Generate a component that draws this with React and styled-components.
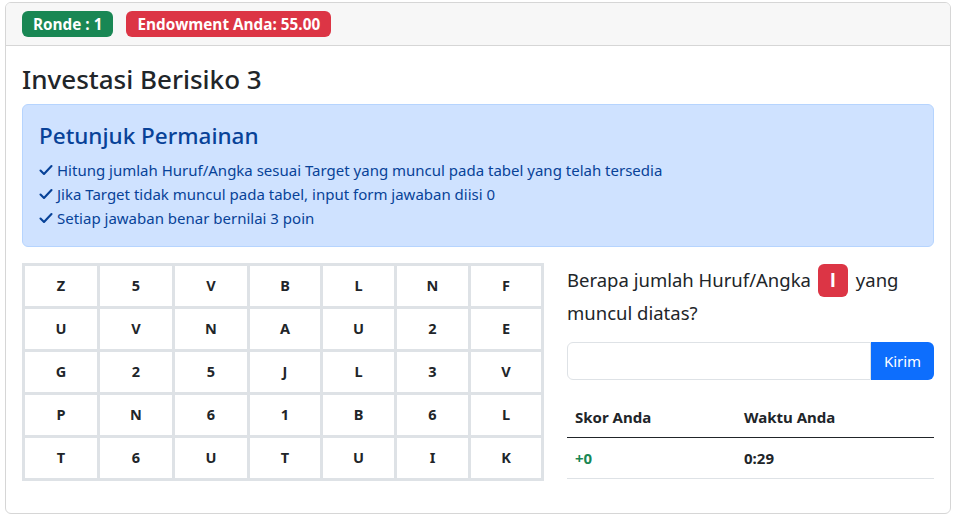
import React, { useState } from 'react'
import styled, { createGlobalStyle } from 'styled-components'

const GlobalStyle = createGlobalStyle`
  * { box-sizing: border-box; }
  body {
    margin: 0;
    background: #fff;
    color: #212529;
    font-family: "Noto Sans", "Open Sans", sans-serif;
    font-size: 15px;
    line-height: 1.5;
  }
`

const Page = styled('div')`
  padding: 2px 4px 0 5px;
`

const Card = styled('div')`
  border: 1px solid #d6d6d6;
  border-radius: 6px;
  background: #fff;
  overflow: hidden;
`

const CardHeader = styled('div')`
  display: flex;
  gap: 13px;
  padding: 8px 16px;
  background: #f7f7f7;
  border-bottom: 1px solid #d6d6d6;
`

const Badge = styled('span')`
  display: inline-block;
  padding: ${p => (p.$big ? '6px 12px' : '5px 11px')};
  margin: ${p => (p.$big ? '0 3px 0 2px' : '0')};
  font-family: "Open Sans", "Noto Sans", sans-serif;
  font-size: ${p => (p.$big ? '19px' : '15.3px')};
  font-weight: 700;
  line-height: ${p => (p.$big ? '1.1' : '1.05')};
  color: #fff;
  border-radius: 6px;
  background: ${p => (p.$tone === 'green' ? '#198754' : '#dc3545')};
  vertical-align: baseline;
`

const CardBody = styled('div')`
  padding: 16px;
`

const Title = styled('h3')`
  margin: 0 0 8px;
  font-size: 26px;
  font-weight: 500;
  line-height: 34px;
`

const Alert = styled('div')`
  background: #cfe2ff;
  border: 1px solid #b6d4fe;
  color: #084298;
  border-radius: 6px;
  padding: 16px;
  margin-bottom: 16px;
`

const AlertHeading = styled('h4')`
  margin: 0 0 7px;
  font-size: 22.5px;
  font-weight: 500;
  line-height: 30px;
`

const Rule = styled('div')`
  display: flex;
  align-items: center;
  gap: 4px;
  line-height: 24px;
`

const Check = styled('svg')`
  width: 14px;
  height: 14px;
  flex: 0 0 auto;
  fill: none;
  stroke: currentColor;
  stroke-width: 2.1;
  stroke-linecap: round;
  stroke-linejoin: round;
`

const Row = styled('div')`
  display: grid;
  grid-template-columns: 521px 1fr;
  column-gap: 24px;
`

const Grid = styled('table')`
  border-collapse: collapse;
  table-layout: fixed;
  border: 3px solid #dee2e6;
  width: 519px;
  margin-bottom: 16px;

  td {
    border: 3px solid #dee2e6;
    text-align: center;
    font-weight: 700;
    font-size: 14.5px;
    height: 43px;
    padding: 0;
  }
`

const Question = styled('p')`
  margin: 0 0 14px;
  padding-top: 1px;
  font-size: 18.5px;
  line-height: 31px;
`

const InputGroup = styled('div')`
  display: flex;
  height: 38px;
  margin-bottom: 17px;
`

const AnswerInput = styled('input')`
  flex: 1;
  min-width: 0;
  border: 1px solid #dee2e6;
  border-radius: 6px 0 0 6px;
  font: inherit;
  padding: 6px 12px;
  outline: none;
`

const SendButton = styled('button')`
  flex: 0 0 63px;
  border: none;
  background: #0d6efd;
  color: #fff;
  font: inherit;
  border-radius: 0 6px 6px 0;
  cursor: pointer;
`

const ScoreTable = styled('table')`
  width: 100%;
  border-collapse: collapse;

  th, td {
    text-align: left;
    padding: 8px;
    font-weight: 700;
    line-height: 24px;
  }
  th {
    border-bottom: 1px solid #212529;
  }
  td {
    border-bottom: 1px solid #dee2e6;
  }
  th:first-child {
    width: 169px;
  }
`

const Score = styled('span')`
  color: #198754;
`

const letters = [
  ['Z', '5', 'V', 'B', 'L', 'N', 'F'],
  ['U', 'V', 'N', 'A', 'U', '2', 'E'],
  ['G', '2', '5', 'J', 'L', '3', 'V'],
  ['P', 'N', '6', '1', 'B', '6', 'L'],
  ['T', '6', 'U', 'T', 'U', 'I', 'K'],
]

const colWidths = [75, 75, 75, 73, 74, 74, 73]

const rules = [
  'Hitung jumlah Huruf/Angka sesuai Target yang muncul pada tabel yang telah tersedia',
  'Jika Target tidak muncul pada tabel, input form jawaban diisi 0',
  'Setiap jawaban benar bernilai 3 poin',
]

export default function App() {
  const [answer, setAnswer] = useState('')

  return (
    <Page>
      <GlobalStyle />
      <Card>
        <CardHeader>
          <Badge $tone="green">Ronde : 1</Badge>
          <Badge $tone="red">Endowment Anda: 55.00</Badge>
        </CardHeader>
        <CardBody>
          <Title>Investasi Berisiko 3</Title>
          <Alert>
            <AlertHeading>Petunjuk Permainan</AlertHeading>
            {rules.map(rule => (
              <Rule key={rule}>
                <Check viewBox="0 0 14 14">
                  <path d="M1.5 7.5 L5 11 L12.5 3" />
                </Check>
                <span>{rule}</span>
              </Rule>
            ))}
          </Alert>
          <Row>
            <div>
              <Grid>
                <colgroup>
                  {colWidths.map((w, i) => (
                    <col key={i} style={{ width: w }} />
                  ))}
                </colgroup>
                <tbody>
                  {letters.map((row, i) => (
                    <tr key={i}>
                      {row.map((c, j) => (
                        <td key={j}>{c}</td>
                      ))}
                    </tr>
                  ))}
                </tbody>
              </Grid>
            </div>
            <div>
              <Question>
                Berapa jumlah Huruf/Angka <Badge $big $tone="red">I</Badge> yang muncul diatas?
              </Question>
              <InputGroup>
                <AnswerInput value={answer} onChange={e => setAnswer(e.target.value)} />
                <SendButton>Kirim</SendButton>
              </InputGroup>
              <ScoreTable>
                <thead>
                  <tr>
                    <th>Skor Anda</th>
                    <th>Waktu Anda</th>
                  </tr>
                </thead>
                <tbody>
                  <tr>
                    <td><Score>+0</Score></td>
                    <td>0:29</td>
                  </tr>
                </tbody>
              </ScoreTable>
            </div>
          </Row>
        </CardBody>
      </Card>
    </Page>
  )
}
